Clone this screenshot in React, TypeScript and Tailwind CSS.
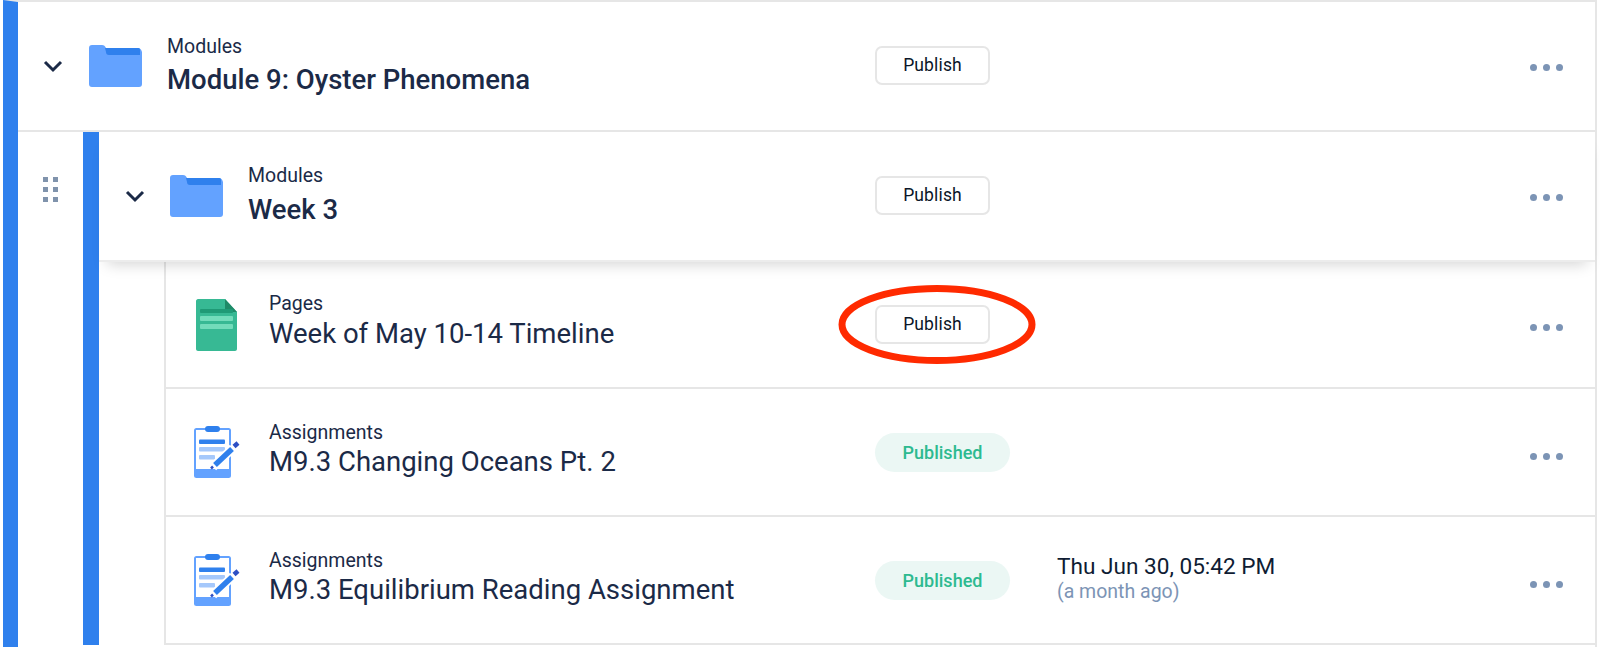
const ink = 'text-[#1b2a47]';

function Chevron() {
  return (
    <svg width="20" height="13" viewBox="0 0 20 13" fill="none" className="shrink-0">
      <path d="M2 2l8 8 8-8" stroke="#1b2a47" strokeWidth="3" />
    </svg>
  );
}

function FolderIcon() {
  return (
    <svg width="53" height="42" viewBox="0 0 53 42" className="shrink-0">
      <path d="M3 0h10c2 0 3 1 4 3h32c2 0 3 1 4 4v32c0 2-1 3-3 3H3c-2 0-3-1-3-3V3c0-2 1-3 3-3z" fill="#63a2ff" />
      <path d="M16 3h33c2 0 2 1 2 3v4H20c-2 0-3-1-3-3z" fill="#2f80ed" />
    </svg>
  );
}

function PageIcon() {
  return (
    <svg width="41" height="52" viewBox="0 0 41 52" className="shrink-0">
      <path d="M2 0h27l12 13v37c0 1-1 2-2 2H2c-1 0-2-1-2-2V2c0-1 1-2 2-2z" fill="#37b994" />
      <path d="M29 0l12 13H29z" fill="#1f8a68" />
      <rect x="4" y="10" width="33" height="4" rx="1" fill="#1f9a76" />
      <rect x="4" y="17" width="33" height="5" rx="1" fill="#73dcbb" />
      <rect x="4" y="25" width="33" height="5" rx="1" fill="#73dcbb" />
    </svg>
  );
}

function AssignmentIcon() {
  return (
    <svg width="46" height="52" viewBox="0 0 46 52" className="shrink-0">
      <rect x="0" y="2" width="37" height="50" rx="2.5" fill="#63a2ff" />
      <rect x="2" y="4" width="33" height="39" fill="#fff" />
      <rect x="11" y="0" width="15" height="6" rx="3" fill="#2f80ed" />
      <rect x="5" y="13.5" width="26" height="4.5" rx="1" fill="#2f80ed" />
      <rect x="5" y="21" width="26" height="4.5" rx="1" fill="#a5c8fb" />
      <rect x="5" y="29" width="16" height="4.5" rx="1" fill="#a5c8fb" />
      <path d="M19 41l20-19" stroke="#fff" strokeWidth="9" />
      <path d="M21 39l17-16" stroke="#2f80ed" strokeWidth="5.5" />
      <path d="M40 20.5l4-3.5" stroke="#2d4fc4" strokeWidth="4.5" />
      <path d="M17 42.5l2-2" stroke="#2d4fc4" strokeWidth="2.5" />
    </svg>
  );
}

function DragHandle() {
  return (
    <svg width="15" height="25" viewBox="0 0 15 25" fill="#8093ac">
      <rect x="0" y="0" width="5" height="5" />
      <rect x="10" y="0" width="5" height="5" />
      <rect x="0" y="10" width="5" height="5" />
      <rect x="10" y="10" width="5" height="5" />
      <rect x="0" y="20" width="5" height="5" />
      <rect x="10" y="20" width="5" height="5" />
    </svg>
  );
}

function Dots({ low = false }: { low?: boolean }) {
  return (
    <div className={`ml-auto flex gap-[6px] mr-[32px] ${low ? 'mt-[8px]' : 'mt-[3px]'}`}>
      <span className="w-[7px] h-[7px] rounded-full bg-[#7c94b5]" />
      <span className="w-[7px] h-[7px] rounded-full bg-[#7c94b5]" />
      <span className="w-[7px] h-[7px] rounded-full bg-[#7c94b5]" />
    </div>
  );
}

function PublishButton({ low = false }: { low?: boolean }) {
  return (
    <button className={`w-[115px] h-[39px] rounded-[7px] border-2 border-[#e6e6e6] bg-white text-[17.5px] font-normal tracking-[0.15px] text-[#0a1628] ${low ? 'mt-[1px]' : 'mb-[2px]'}`}>
      Publish
    </button>
  );
}

function PublishedPill() {
  return (
    <span className="w-[135px] h-[39px] rounded-full bg-[#ebf7f4] text-[18px] font-medium text-[#2dba90] flex items-center justify-center">
      Published
    </span>
  );
}

export default function App() {
  return (
    <div className="relative h-[647px] overflow-hidden bg-white font-['Roboto',sans-serif]">
      <div className="mx-[3px] h-[660px] border-t-2 border-r-2 border-t-[#e6e6e6] border-r-[#e6e6e6] border-l-[15px] border-l-[#2f80ed]">
        {/* Top module */}
        <div className="h-[130px] border-b-2 border-[#e6e6e6] flex items-center">
          <div className="w-[857px] flex items-center shrink-0">
            <div className="ml-[25px] mr-[26px]"><Chevron /></div>
            <FolderIcon />
            <div className={`ml-[25px] pt-[1px] ${ink}`}>
              <div className="text-[19.5px] leading-[22px]">Modules</div>
              <div className="text-[27.5px] leading-[36px] font-medium mt-[4px]">Module 9: Oyster Phenomena</div>
            </div>
          </div>
          <PublishButton />
          <Dots />
        </div>

        <div className="flex">
          <div className="w-[65px] shrink-0 pl-[25px] pt-[45px]">
            <DragHandle />
          </div>
          <div className="flex-1 border-l-[16px] border-[#2f80ed]">
            {/* Week module */}
            <div className="relative h-[130px] -mb-[2px] flex items-center border-b-2 border-[#ececec] shadow-[0_10px_14px_-8px_rgba(0,0,0,0.18)]">
              <div className="w-[776px] flex items-center shrink-0">
                <div className="ml-[26px] mr-[25px]"><Chevron /></div>
                <FolderIcon />
                <div className={`ml-[25px] ${ink}`}>
                  <div className="text-[19.5px] leading-[22px]">Modules</div>
                  <div className="text-[27.5px] leading-[36px] font-medium mt-[5px]">Week 3</div>
                </div>
              </div>
              <PublishButton />
              <Dots />
            </div>

            {/* Items */}
            <div className="ml-[65px] border-l-2 border-[#e6e6e6]">
              <div className="h-[129px] border-b-2 border-[#e6e6e6] flex items-center">
                <div className="w-[709px] flex items-center shrink-0">
                  <div className="ml-[30px] w-[73px] shrink-0 pt-[2px]"><PageIcon /></div>
                  <div className={`${ink} mb-[2px]`}>
                    <div className="text-[19.5px] leading-[22px]">Pages</div>
                    <div className="text-[27.5px] leading-[36px] mt-[1px]">Week of May 10-14 Timeline</div>
                  </div>
                </div>
                <PublishButton low />
                <Dots low />
              </div>
              <div className="h-[128px] border-b-2 border-[#e6e6e6] flex items-center">
                <div className="w-[709px] flex items-center shrink-0">
                  <div className="ml-[28px] w-[75px] shrink-0"><AssignmentIcon /></div>
                  <div className={`${ink} mb-[3px]`}>
                    <div className="text-[19.5px] leading-[22px]">Assignments</div>
                    <div className="text-[27.5px] leading-[36px]">M9.3 Changing Oceans Pt. 2</div>
                  </div>
                </div>
                <PublishedPill />
                <Dots low />
              </div>
              <div className="h-[128px] border-b-2 border-[#e6e6e6] flex items-center">
                <div className="w-[709px] flex items-center shrink-0">
                  <div className="ml-[28px] w-[75px] shrink-0"><AssignmentIcon /></div>
                  <div className={`${ink} mb-[3px]`}>
                    <div className="text-[19.5px] leading-[22px]">Assignments</div>
                    <div className="text-[27.5px] leading-[36px]">M9.3 Equilibrium Reading Assignment</div>
                  </div>
                </div>
                <PublishedPill />
                <div className="ml-[47px] mb-[4px]">
                  <div className="text-[22.6px] leading-[27px] text-[#0f1c33]">Thu Jun 30, 05:42 PM</div>
                  <div className="text-[19.5px] leading-[24px] text-[#7c94b5]">(a month ago)</div>
                </div>
                <Dots low />
              </div>
            </div>
          </div>
        </div>
      </div>

      {/* Red annotation */}
      <svg width="204" height="84" viewBox="0 0 204 84" fill="none" className="absolute left-[835px] top-[282px]">
        <ellipse cx="102" cy="42.5" rx="95" ry="36" stroke="#ff2a00" strokeWidth="7" />
      </svg>
    </div>
  );
}
